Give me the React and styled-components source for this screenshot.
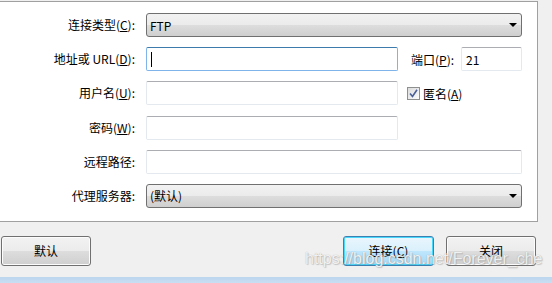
import React from "react";
import styled, { createGlobalStyle } from "styled-components";

const Global = createGlobalStyle`
  html, body {
    margin: 0;
    padding: 0;
    background: #f0f0f0;
    overflow: hidden;
  }
  body {
    font-family: "Noto Sans CJK SC", "Liberation Sans", sans-serif;
    font-size: 12px;
    color: #000;
  }
`;

const Screen = styled.div`
  position: relative;
  width: 552px;
  height: 283px;
  display: flex;
  flex-direction: column;
  background: #f0f0f0;
`;

const Panel = styled.div`
  margin-top: 1px;
  width: 537px;
  background: #fff;
  border-top: 1px solid #a0a0a0;
  border-right: 1px solid #a0a0a0;
  border-bottom: 1px solid #a0a0a0;
  padding: 11px 0 13px 0;
  display: flex;
  flex-direction: column;
  gap: 10.2px;
`;

const Row = styled.div`
  height: 24px;
  display: flex;
  align-items: center;
`;

const Label = styled.label`
  width: 135px;
  margin-right: 11px;
  text-align: right;
  white-space: nowrap;
  line-height: 24px;
  flex-shrink: 0;
`;

const SideLabel = styled.label`
  margin-left: ${(p) => p.$ml || 13}px;
  margin-right: ${(p) => p.$mr || 0}px;
  white-space: nowrap;
  display: flex;
  align-items: center;
`;

const U = styled.span`
  text-decoration: underline;
  text-underline-offset: 1px;
`;

const Input = styled.div`
  box-sizing: border-box;
  width: ${(p) => p.$w}px;
  height: 24px;
  border: 1px solid ${(p) => (p.$focus ? "#7eb4ea" : "#e3e9ef")};
  border-top-color: ${(p) => (p.$focus ? "#3d7bad" : "#abadb3")};
  border-radius: 2px;
  padding: 0 4px;
  display: flex;
  align-items: center;
  background: #fff;
`;

const Caret = styled.span`
  width: 1px;
  height: 15px;
  background: #000;
`;

const Select = styled.div`
  box-sizing: border-box;
  width: 376px;
  height: 24px;
  border: 1px solid #707070;
  border-radius: 3px;
  background: linear-gradient(#f2f2f2 0%, #ebebeb 50%, #dddddd 51%, #cfcfcf 100%);
  display: flex;
  align-items: center;
  justify-content: space-between;
  padding: 0 4px 0 3px;
`;

const Arrow = styled.span`
  width: 0;
  height: 0;
  border-left: 4px solid transparent;
  border-right: 4px solid transparent;
  border-top: 4px solid #000;
`;

const Check = styled.span`
  box-sizing: border-box;
  width: 13px;
  height: 13px;
  border: 1px solid #8e8f8f;
  background: linear-gradient(135deg, #dcdcdc, #fbfbfb);
  display: inline-flex;
  align-items: center;
  justify-content: center;
  margin-right: 3px;
`;

const Footer = styled.div`
  flex: 1;
  display: flex;
  align-items: flex-start;
  padding: 14px 16px 0 1px;
`;

const Button = styled.button`
  box-sizing: border-box;
  width: ${(p) => p.$w || 90}px;
  height: 30px;
  margin-left: ${(p) => p.$ml || 0}px;
  font-family: inherit;
  font-size: 12px;
  color: #000;
  border-radius: 3px;
  border: 1px solid ${(p) => (p.$primary ? "#3c7fb1" : "#707070")};
  box-shadow: inset 0 0 0 1px ${(p) => (p.$primary ? "#48d8fb" : "#fcfcfc")};
  background: ${(p) =>
    p.$primary
      ? "linear-gradient(#eaf6fd 0%, #d9f0fc 50%, #bee6fd 51%, #a7d9f5 100%)"
      : "linear-gradient(#f2f2f2 0%, #ebebeb 50%, #dddddd 51%, #cfcfcf 100%)"};
  padding: 0;
`;

const Spacer = styled.div`
  flex: 1;
`;

const Frame = styled.div`
  height: 6px;
  background: linear-gradient(#bcd6ef, #c9def2);
`;

const Watermark = styled.div`
  position: absolute;
  left: 305px;
  top: 250px;
  font-family: "Liberation Sans", Arial, sans-serif;
  font-size: 16px;
  line-height: 18px;
  color: rgba(255, 255, 255, 0.85);
  text-shadow: 0 0 1px rgba(120, 120, 120, 0.6), 1px 1px 1px rgba(140, 140, 140, 0.4);
  white-space: nowrap;
  pointer-events: none;
`;

export default function App() {
  return (
    <Screen>
      <Global />
      <Panel>
        <Row>
          <Label>
            连接类型(<U>C</U>):
          </Label>
          <Select>
            <span>FTP</span>
            <Arrow />
          </Select>
        </Row>
        <Row>
          <Label>
            地址或 URL(<U>D</U>):
          </Label>
          <Input $w={252} $focus>
            <Caret />
          </Input>
          <SideLabel $ml={13} $mr={7}>
            端口(<U>P</U>):
          </SideLabel>
          <Input $w={61}>21</Input>
        </Row>
        <Row>
          <Label>
            用户名(<U>U</U>):
          </Label>
          <Input $w={252} />
          <SideLabel $ml={9}>
            <Check>
              <svg width="9" height="9" viewBox="0 0 9 9">
                <path d="M1 4.5 L3.5 7.5 L8 0.8" fill="none" stroke="#4a5f99" strokeWidth="1.6" />
              </svg>
            </Check>
            匿名(<U>A</U>)
          </SideLabel>
        </Row>
        <Row>
          <Label>
            密码(<U>W</U>):
          </Label>
          <Input $w={252} />
        </Row>
        <Row>
          <Label>远程路径:</Label>
          <Input $w={376} />
        </Row>
        <Row>
          <Label>代理服务器:</Label>
          <Select>
            <span>(默认)</span>
            <Arrow />
          </Select>
        </Row>
      </Panel>
      <Footer>
        <Button $w={90}>默认</Button>
        <Spacer />
        <Button $w={91} $primary>
          连接(<U>C</U>)
        </Button>
        <Button $w={90} $ml={12}>
          关闭
        </Button>
      </Footer>
      <Frame />
      <Watermark>https://blog.csdn.net/Forever_che</Watermark>
    </Screen>
  );
}
